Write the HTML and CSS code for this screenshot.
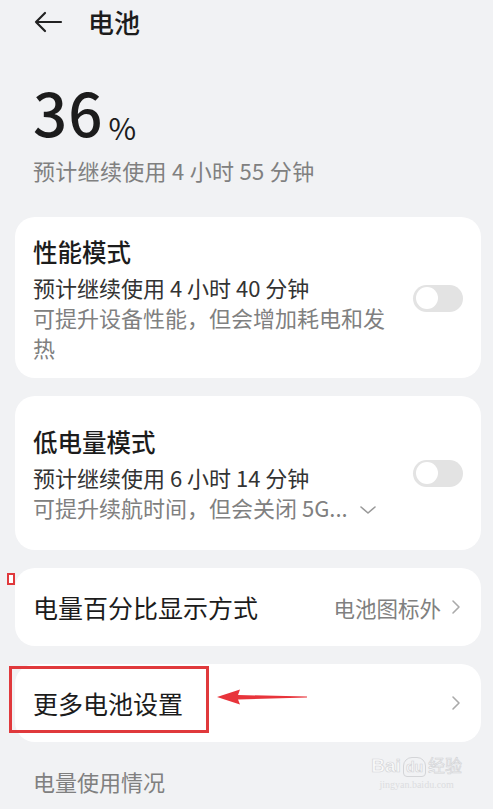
FILE: index.html
```html
<!DOCTYPE html>
<html lang="zh-CN">
<head>
  <meta charset="UTF-8">
  <meta name="viewport" content="width=device-width, initial-scale=1.0">
  <title>电池</title>
  <link rel="stylesheet" href="styles.css">
</head>
<body>
<header class="topbar">
  <svg class="back" width="30" height="22" viewBox="0 0 30 22">
    <path d="M28 11H3M12 2L3 11l9 9" fill="none" stroke="#222" stroke-width="2.2" stroke-linecap="round" stroke-linejoin="round"/>
  </svg>
  <h1>电池</h1>
</header>

<section class="level">
  <div class="percent"><span class="num">36</span><span class="pct">%</span></div>
  <p class="remain">预计继续使用 4 小时 55 分钟</p>
</section>

<div class="card mode">
  <div class="text">
    <div class="title">性能模式</div>
    <div class="sub">预计继续使用 4 小时 40 分钟</div>
    <div class="desc">可提升设备性能，但会增加耗电和发热</div>
  </div>
  <div class="switch"><span class="knob"></span></div>
</div>

<div class="card mode low">
  <div class="text">
    <div class="title">低电量模式</div>
    <div class="sub">预计继续使用 6 小时 14 分钟</div>
    <div class="desc">可提升续航时间，但会关闭 5G...
      <svg class="more" width="18" height="10" viewBox="0 0 18 10">
        <path d="M2 2l7 6 7-6" fill="none" stroke="#999" stroke-width="1.6" stroke-linecap="round" stroke-linejoin="round"/>
      </svg>
    </div>
  </div>
  <div class="switch"><span class="knob"></span></div>
</div>

<div class="card row">
  <span class="marker"></span>
  <div class="title">电量百分比显示方式</div>
  <div class="value">电池图标外
    <svg class="chev" width="10" height="16" viewBox="0 0 10 16">
      <path d="M2 2l6 6-6 6" fill="none" stroke="#aaa" stroke-width="1.6" stroke-linecap="round" stroke-linejoin="round"/>
    </svg>
  </div>
</div>

<div class="card row">
  <div class="title">更多电池设置</div>
  <div class="value">
    <svg class="chev" width="10" height="16" viewBox="0 0 10 16">
      <path d="M2 2l6 6-6 6" fill="none" stroke="#aaa" stroke-width="1.6" stroke-linecap="round" stroke-linejoin="round"/>
    </svg>
  </div>
  <!-- 标注 -->
  <span class="highlight"></span>
  <svg class="arrow" width="92" height="16" viewBox="0 0 92 16">
    <path d="M0 8L23 0.5L21 6L90 7.6L90 8.6L21 10.5L23 15.5Z" fill="#e8343b"/>
  </svg>
</div>

<div class="section">
  <span>电量使用情况</span>
  <div class="watermark">
    <span class="wm-logo">Bai<span class="wm-du">du</span><span class="wm-cn">经验</span></span>
    <span class="wm-url">jingyan.baidu.com</span>
  </div>
</div>

<div class="card tail"></div>
</body>
</html>
```

FILE: styles.css
```css
:root {
  --background-color: #f1f2f4;
  --card-background: #ffffff;
  --text-color: #1c1c1c;
  --sub-color: #333333;
  --muted-color: #808080;
  --switch-color: #e3e3e3;
  --mark-color: #e0393c;
}

body {
  font-family: "Noto Sans CJK SC", "Noto Sans", sans-serif;
  margin: 0;
  padding: 0;
  background-color: var(--background-color);
  color: var(--text-color);
  overflow: hidden;
}

.topbar {
  height: 44px;
  display: flex;
  align-items: center;
  padding-left: 33px;
}

.topbar .back {
  margin-right: 25px;
}

.topbar h1 {
  margin: 0;
  font-size: 26px;
  font-weight: 500;
  line-height: 44px;
}

.level {
  padding: 0 33px;
  margin-top: 32px;
}

.percent {
  height: 70px;
  line-height: 70px;
  display: flex;
  align-items: baseline;
}

.percent .num {
  font-size: 60px;
  font-weight: 500;
  letter-spacing: 1px;
}

.percent .pct {
  font-size: 30px;
  margin-left: 5px;
  position: relative;
  top: 3px;
}

.remain {
  margin: 9px 0 0;
  font-size: 22px;
  line-height: 30px;
  letter-spacing: 0.3px;
  color: var(--muted-color);
}

.card {
  position: relative;
  margin: 32px 12px 18px 15px;
  background-color: var(--card-background);
  border-radius: 20px;
}

.card + .card {
  margin-top: 0;
}

.mode {
  display: flex;
  align-items: center;
  padding: 17px 18px 16px;
}

.mode.low {
  padding: 28px 18px 28px;
}

.mode .text {
  width: 362px;
  margin-right: 18px;
}

.title {
  font-size: 24.5px;
  font-weight: 500;
  line-height: 36px;
}

.sub {
  margin-top: 2px;
  font-size: 22px;
  line-height: 30px;
  color: var(--sub-color);
}

.desc {
  font-size: 22px;
  line-height: 30px;
  color: var(--muted-color);
}

.desc .more {
  margin-left: 6px;
  vertical-align: 2px;
}

.switch {
  width: 50px;
  height: 27px;
  border-radius: 14px;
  background-color: var(--switch-color);
  display: flex;
  align-items: center;
  padding-left: 3px;
  box-sizing: border-box;
}

.switch .knob {
  width: 22px;
  height: 22px;
  border-radius: 50%;
  background-color: #ffffff;
}

.row {
  display: flex;
  align-items: center;
  justify-content: space-between;
  height: 78px;
  padding: 0 20px 0 18px;
  box-sizing: border-box;
}

.row .title {
  font-size: 25px;
  font-weight: 400;
}

.row .value {
  display: flex;
  align-items: center;
  font-size: 21.5px;
  color: var(--muted-color);
}

.row .chev {
  margin-left: 10px;
}

/* 标注 */
.marker {
  position: absolute;
  left: -8px;
  top: 5px;
  width: 8px;
  height: 12px;
  border: 2px solid var(--mark-color);
  box-sizing: border-box;
  background: #ffffff;
}

.highlight {
  position: absolute;
  left: -6px;
  top: 2px;
  width: 200px;
  height: 67px;
  border: 3px solid var(--mark-color);
  box-sizing: border-box;
}

.arrow {
  position: absolute;
  left: 202px;
  top: 25px;
}

.section {
  position: relative;
  margin: 24px 33px 13px;
  font-size: 22px;
  line-height: 30px;
  color: var(--muted-color);
}

.watermark {
  position: absolute;
  right: -2px;
  top: -14px;
  display: flex;
  flex-direction: column;
  align-items: center;
}

.wm-logo {
  font-family: "Liberation Sans", sans-serif;
  font-size: 19px;
  font-weight: 700;
  line-height: 26px;
  color: #fafafa;
  -webkit-text-stroke: 0.7px #d4d5d8;
}

.wm-du {
  display: inline-block;
  margin: 0 2px;
  padding: 0 2px;
  border-radius: 9px 9px 4px 4px;
  border: 1px solid #d4d5d8;
  font-size: 14px;
  line-height: 18px;
}

.wm-cn {
  font-family: "Noto Sans CJK SC", sans-serif;
  font-size: 17px;
  font-weight: 400;
}

.wm-url {
  font-family: "Liberation Serif", serif;
  font-size: 10px;
  line-height: 12px;
  color: #dcdde0;
}

.tail {
  height: 40px;
}
```
